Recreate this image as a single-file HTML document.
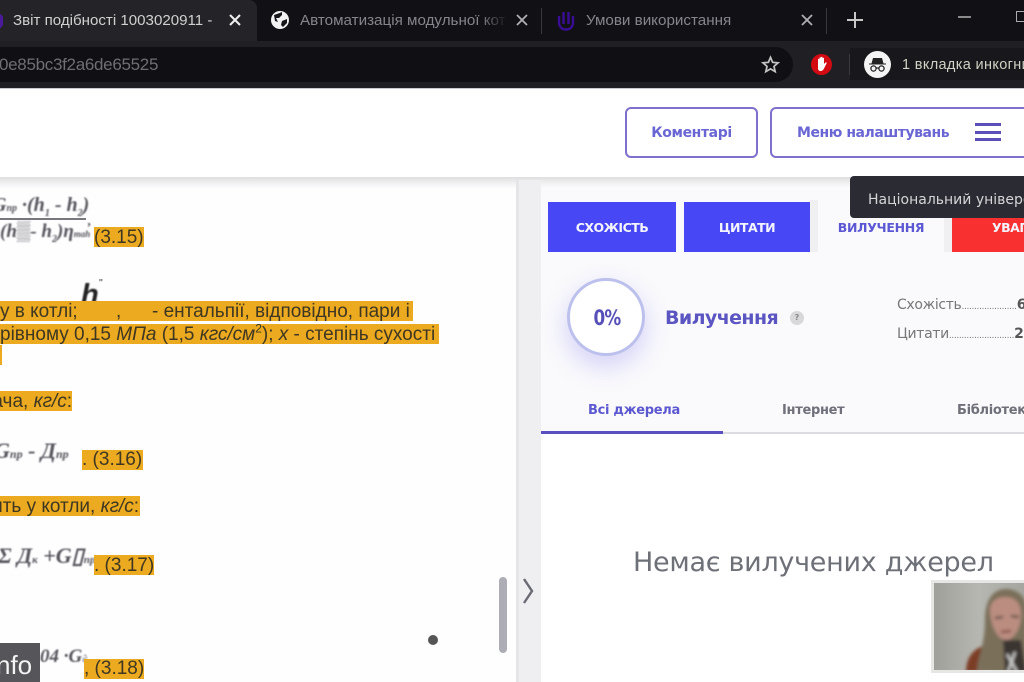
<!DOCTYPE html>
<html><head><meta charset="utf-8"><style>
html,body{margin:0;padding:0;width:1024px;height:682px;overflow:hidden;background:#fefeff;font-family:"Liberation Sans","DejaVu Sans",sans-serif}
.a{position:absolute;white-space:nowrap}
.h{position:absolute;background:#ebaa1f;height:20px}
.t{position:absolute;white-space:nowrap;font-size:19px;color:#3f3722;line-height:20px;margin-top:1px}
.m{position:absolute;white-space:nowrap;font-family:"Liberation Serif",serif;font-style:italic;font-weight:bold;color:#55555c;filter:blur(.7px)}
.b{position:absolute;color:#f4f4ff;font:bold 12.5px "DejaVu Sans",sans-serif;text-align:center;letter-spacing:-.5px}
</style></head><body>
<!-- chrome -->
<div class="a" style="left:0;top:0;width:1024px;height:41px;background:#101015"></div>
<div class="a" style="left:0;top:0;width:257px;height:41px;background:#242428;border-radius:0 8px 0 0"></div>
<div class="a" style="left:0;top:41px;width:1024px;height:47px;background:#202024"></div>
<div class="a" style="left:0;top:47px;width:793px;height:35px;background:#0f0f14;border-radius:0 18px 18px 0"></div>
<div class="a" style="left:850px;top:48px;width:174px;height:32px;background:#18181c"></div>
<div class="a" style="left:0;top:88px;width:1024px;height:1px;background:#c9c9d2"></div>
<div class="a" style="left:-5px;top:14px;width:8px;height:14px;border-radius:4px;background:#4a1a9a"></div>
<div class="a" style="left:13px;top:11px;font-size:15.1px;line-height:20px;color:#d0d0d0">Звіт подібності 1003020911 -</div>
<svg class="a" style="left:228px;top:13px" width="14" height="14"><path d="M2 2L12 12M12 2L2 12" stroke="#f0f0f0" stroke-width="2"/></svg>
<svg class="a" style="left:271px;top:11px" width="18" height="18" viewBox="0 0 18 18"><circle cx="9" cy="9" r="9" fill="#f2f2f2"/><path d="M3 4C6 3 9 2 11 1L11 4L8 7L5 7L7 11L4 10ZM11 10L16 8L16 12L12 16L10 14Z" fill="#15151a"/></svg>
<div class="a" style="left:300px;top:11px;width:205px;overflow:hidden;font-size:15.2px;line-height:20px;color:#85858b">Автоматизація модульної котельні</div>
<div class="a" style="left:480px;top:8px;width:28px;height:24px;background:linear-gradient(90deg,transparent,#101015)"></div>
<svg class="a" style="left:516px;top:14px" width="12" height="12"><path d="M1 1L11 11M11 1L1 11" stroke="#b0b0b4" stroke-width="1.8"/></svg>
<div class="a" style="left:541px;top:8px;width:1px;height:26px;background:#3a3a3e"></div>
<svg class="a" style="left:557px;top:10px" width="18" height="21" viewBox="0 0 18 21" fill="none" stroke="#3a0d96" stroke-width="2.4"><path d="M2 6V12C2 17 5 19.500 9 19.500S16 17 16 12V6"/><path d="M6.500 2V14M11.500 2V14"/></svg>
<div class="a" style="left:586px;top:11px;font-size:15.2px;line-height:20px;color:#85858b">Умови використання</div>
<svg class="a" style="left:801px;top:14px" width="12" height="12"><path d="M1 1L11 11M11 1L1 11" stroke="#b0b0b4" stroke-width="1.8"/></svg>
<div class="a" style="left:826px;top:8px;width:1px;height:26px;background:#3a3a3e"></div>
<svg class="a" style="left:847px;top:12px" width="16" height="16"><path d="M8 0V16M0 8H16" stroke="#c8c8c8" stroke-width="2"/></svg>
<div class="a" style="left:958px;top:16px;width:13px;height:1.500px;background:#8a8a8a"></div>
<div class="a" style="left:1016px;top:11px;width:12px;height:11px;border:1.500px solid #aaa;box-sizing:border-box"></div>
<div class="a" style="left:-1px;top:55px;font-size:17px;line-height:20px;color:#6e6e73;letter-spacing:-.3px">0e85bc3f2a6de65525</div>
<svg class="a" style="left:761px;top:55px" width="19" height="19" viewBox="0 0 24 24" fill="none" stroke="#c2c2c2" stroke-width="2.200"><path d="M12 3L14.700 9.300L21.500 9.900L16.400 14.400L17.900 21L12 17.500L6.100 21L7.600 14.400L2.500 9.900L9.300 9.300Z"/></svg>
<div class="a" style="left:811px;top:54px;width:21px;height:21px;border-radius:50%;background:#d40a12"></div>
<svg class="a" style="left:815px;top:56px" width="13" height="16" viewBox="0 0 13 16"><path d="M3 7V3.500C3 2.500 4.500 2.500 4.500 3.500V2C4.500 1 6 1 6 2V1.500C6 .5 7.500 .5 7.500 1.500V2.500C7.500 1.500 9 1.500 9 2.500V8L10.500 6.500C11.500 6 12 7 11.500 7.500L9 12.500C8 14.500 7 15 5.500 15C4 15 3 14 3 12Z" fill="#fff"/></svg>
<div class="a" style="left:849px;top:54px;width:1px;height:21px;background:#3a3a3e"></div>
<div class="a" style="left:864px;top:51px;width:27px;height:27px;border-radius:50%;background:#f4f4f4"></div>
<svg class="a" style="left:866px;top:53px" width="23" height="23" viewBox="0 0 23 23"><path d="M7 5H16L17.500 10.500H20V11.500H3V10.500H5.500Z" fill="#222"/><circle cx="7.500" cy="15.500" r="2.600" fill="none" stroke="#222" stroke-width="1.300"/><circle cx="15.500" cy="15.500" r="2.600" fill="none" stroke="#222" stroke-width="1.300"/><path d="M10 15H13" stroke="#222" stroke-width="1.200"/></svg>
<div class="a" style="left:902px;top:56px;font-size:14.5px;line-height:18px;color:#cfd2c4;letter-spacing:.35px">1 вкладка инкогнито</div>

<!-- header -->
<div class="a" style="left:0;top:89px;width:1024px;height:88px;background:#fff"></div>
<div class="a" style="left:0;top:177px;width:1024px;height:12px;background:linear-gradient(#dedee0,#f4f4f5 60%,#fdfdfe)"></div>
<div class="a" style="left:625px;top:107px;width:133px;height:51px;box-sizing:border-box;border:2px solid #7d70cc;border-radius:6px;background:#fff;text-align:center;font:bold 14px/49px 'DejaVu Sans',sans-serif;letter-spacing:-.4px;color:#6a66d4">Коментарі</div>
<div class="a" style="left:770px;top:107px;width:270px;height:51px;box-sizing:border-box;border:2px solid #7d70cc;border-radius:6px;background:#fff"></div>
<div class="a" style="left:797px;top:123px;font:bold 14px/20px 'DejaVu Sans',sans-serif;letter-spacing:-.45px;color:#6a66d4">Меню налаштувань</div>
<div class="a" style="left:975px;top:123px;width:26px;height:3px;background:#5a50b8"></div>
<div class="a" style="left:975px;top:131px;width:26px;height:3px;background:#5a50b8"></div>
<div class="a" style="left:975px;top:138px;width:26px;height:3px;background:#5a50b8"></div>

<!-- divider / gutter -->
<div class="a" style="left:516px;top:180px;width:25px;height:502px;background:#efeff2"></div>
<div class="a" style="left:516px;top:180px;width:3px;height:502px;background:#e5e5e8"></div>
<div class="a" style="left:541px;top:255px;width:483px;height:427px;background:#fff"></div>
<div class="a" style="left:541px;top:189px;width:483px;height:243px;background:#fafafc"></div>
<div class="a" style="left:499px;top:577px;width:8px;height:76px;border-radius:4px;background:#adadb5"></div>
<svg class="a" style="left:522px;top:577px" width="14" height="28"><path d="M2 2L10 14L2 26" fill="none" stroke="#6a6a74" stroke-width="2.400"/></svg>
<div class="a" style="left:428px;top:635px;width:10px;height:10px;border-radius:50%;background:#555"></div>

<!-- document left -->
<div class="m" style="left:-8px;top:193px;font-size:20px;line-height:24px">G<span style="font-size:10px">np</span> ·(h<sub style="font-size:10px">1</sub> - h<sub style="font-size:10px">2</sub>)</div>
<div class="a" style="left:0;top:218px;width:86px;height:1.500px;background:#77777c"></div>
<div class="m" style="left:0;top:220px;font-size:19px;line-height:24px">(h▒- h<sub style="font-size:10px">2</sub>)η<span style="font-size:9px">mah</span></div>
<div class="m" style="left:88px;top:213px;font-size:13px;color:#444">,</div>
<div class="h" style="left:94px;top:227px;width:50px"></div><div class="t" style="left:94px;top:227px">(3.15)</div>
<div class="m" style="left:81px;top:278px;font-size:29px;line-height:34px;color:#222;font-family:'Liberation Sans',sans-serif">h</div>
<div class="a" style="left:99px;top:278px;font-size:10px;color:#333">''</div>
<div class="h" style="left:0;top:301px;width:413px"></div><div class="t" style="left:0;top:301px">у в котлі;</div>
<div class="t" style="left:116px;top:301px">,</div><div class="t" style="left:152px;top:301px">- ентальпії, відповідно, пари і</div>
<div class="h" style="left:0;top:324px;width:439px"></div><div class="t" style="left:0;top:324px">рівному 0,15 <i>МПа</i> (1,5 <i>кгс/см</i><sup style="font-size:12px;line-height:0">2</sup>); <i>x</i> - степінь сухості</div>
<div class="a" style="left:0;top:345px;width:2px;height:20px;background:#ebaa1f"></div>
<div class="h" style="left:0;top:391px;width:72px"></div><div class="t" style="right:952px;top:391px">ача, <i>кг/с</i>:</div>
<div class="m" style="left:-6px;top:439px;font-size:22px;line-height:24px">G<span style="font-size:12px">np</span> - Д<span style="font-size:12px">np</span></div>
<div class="h" style="left:82px;top:450px;width:61px"></div><div class="t" style="left:82px;top:449px">. (3.16)</div>
<div class="h" style="left:0;top:496px;width:140px"></div><div class="t" style="right:885px;top:496px">ить у котли, <i>кг/с</i>:</div>
<div class="m" style="left:-2px;top:544px;font-size:22px;line-height:24px">Σ Д<span style="font-size:11px">к</span> +G▯<span style="font-size:11px">np</span></div>
<div class="h" style="left:94px;top:555px;width:60px"></div><div class="t" style="left:94px;top:555px">. (3.17)</div>
<div class="m" style="left:40px;top:646px;font-size:19px;line-height:22px">04 ·G<span style="font-size:10px">∂</span></div>
<div class="h" style="left:84px;top:659px;width:60px"></div><div class="t" style="left:84px;top:658px">, (3.18)</div>
<div class="a" style="left:0;top:643px;width:40px;height:39px;background:#55555a"></div>
<div class="a" style="left:-4px;top:648px;font-size:26px;line-height:34px;color:#f4f4f4">nfo</div>

<!-- right tabs -->
<div class="a" style="left:810px;top:200px;width:143px;height:52px;background:#f0f0f2"></div>
<div class="a" style="left:818px;top:196px;width:126px;height:60px;background:#fafafc"></div>
<div class="b" style="left:548px;top:202px;width:128px;height:50px;line-height:52px;background:#4747f5">СХОЖІСТЬ</div>
<div class="b" style="left:684px;top:202px;width:126px;height:50px;line-height:52px;background:#4747f5">ЦИТАТИ</div>
<div class="b" style="left:818px;top:202px;width:126px;height:50px;line-height:52px;color:#5c58d4;letter-spacing:-.3px">ВИЛУЧЕННЯ</div>
<div class="b" style="left:952px;top:215px;width:100px;height:37px;line-height:26px;background:#f93030;text-align:left;text-indent:40px">УВАГА</div>
<div class="a" style="left:850px;top:176px;width:190px;height:42px;background:#2b2c33;border-radius:4px"></div>
<div class="a" style="left:868px;top:190px;font:14px/20px 'DejaVu Sans',sans-serif;color:#d5d5d8;letter-spacing:0">Національний університет</div>

<div class="a" style="left:567px;top:278px;width:78px;height:78px;box-sizing:border-box;border-radius:50%;background:#fff;border:3px solid #bcc0ec;box-shadow:0 10px 26px rgba(120,110,240,.3)"></div>
<div class="a" style="left:568px;top:304px;width:78px;text-align:center;font:bold 21px/28px 'DejaVu Sans',sans-serif;letter-spacing:-1px;transform:scaleX(.8);color:#5650b8">0%</div>
<div class="a" style="left:665px;top:305px;font:bold 19px/26px 'DejaVu Sans',sans-serif;letter-spacing:-.6px;color:#5b55c2">Вилучення</div>
<div class="a" style="left:790px;top:311px;width:14px;height:14px;border-radius:50%;background:#d8d8da;text-align:center;font:bold 8px/14px 'DejaVu Sans',sans-serif;color:#888">?</div>
<div class="a" style="left:897px;top:295px;font:14px/20px 'DejaVu Sans',sans-serif;letter-spacing:-.35px;color:#777">Схожість<span style="font-size:9px">......................</span><b style="color:#555">6</b></div>
<div class="a" style="left:897px;top:324px;font:14px/20px 'DejaVu Sans',sans-serif;letter-spacing:-.35px;color:#777">Цитати<span style="font-size:9px">..........................</span><b style="color:#555">2</b></div>
<div class="a" style="left:588px;top:401px;font:bold 13px/20px 'DejaVu Sans',sans-serif;letter-spacing:-.3px;color:#5c58d0">Всі джерела</div>
<div class="a" style="left:782px;top:401px;font:bold 13px/20px 'DejaVu Sans',sans-serif;letter-spacing:-.3px;color:#70707a">Інтернет</div>
<div class="a" style="left:957px;top:401px;font:bold 13px/20px 'DejaVu Sans',sans-serif;letter-spacing:-.3px;color:#70707a">Бібліотека</div>
<div class="a" style="left:541px;top:432px;width:483px;height:2px;background:#dcdce0"></div>
<div class="a" style="left:541px;top:431px;width:182px;height:3px;background:#5a50c0"></div>
<div class="a" style="left:633px;top:546px;font:27px/34px 'DejaVu Sans',sans-serif;letter-spacing:-.28px;color:#6e7078">Немає вилучених джерел</div>

<!-- webcam -->
<svg class="a" style="left:931px;top:580px" width="93" height="93" viewBox="0 0 93 93">
<defs><filter id="b" x="-20%" y="-20%" width="140%" height="140%"><feGaussianBlur stdDeviation="1.600"/></filter>
<linearGradient id="g" x1="0" x2="1" y1="0" y2="0"><stop offset="0" stop-color="#9fa09a"/><stop offset=".5" stop-color="#b6b7b1"/><stop offset="1" stop-color="#a5a69f"/></linearGradient></defs>
<rect width="93" height="93" fill="#e6e6e4"/>
<rect x="3" y="3" width="90" height="87" fill="url(#g)"/>
<svg x="3" y="3" width="90" height="87" viewBox="3 3 90 87">
<g filter="url(#b)">
<path d="M35 92C35 80 40 70 52 66L60 92Z" fill="#7c3c28"/>
<path d="M46 92C46 78 54 66 54 40C54 20 62 9 75 9C86 9 94 16 95 26V92Z" fill="#7a705a"/>
<path d="M59 32C58 22 66 16 76 17C86 18 91 25 90 38C89 50 82 60 75 60C67 60 60 47 59 32Z" fill="#ba8d80"/>
<path d="M64 38L72 37M80 36L88 37" stroke="#5e4a40" stroke-width="2.200"/>
<path d="M70 52L80 51" stroke="#8a4f48" stroke-width="2.500"/>
<path d="M72 60H90L95 92H74Z" fill="#3a3633"/>
<path d="M76 74L86 92M84 72L77 92" stroke="#dcdcdc" stroke-width="2"/>
</g>
</svg>
</svg>
</body></html>
